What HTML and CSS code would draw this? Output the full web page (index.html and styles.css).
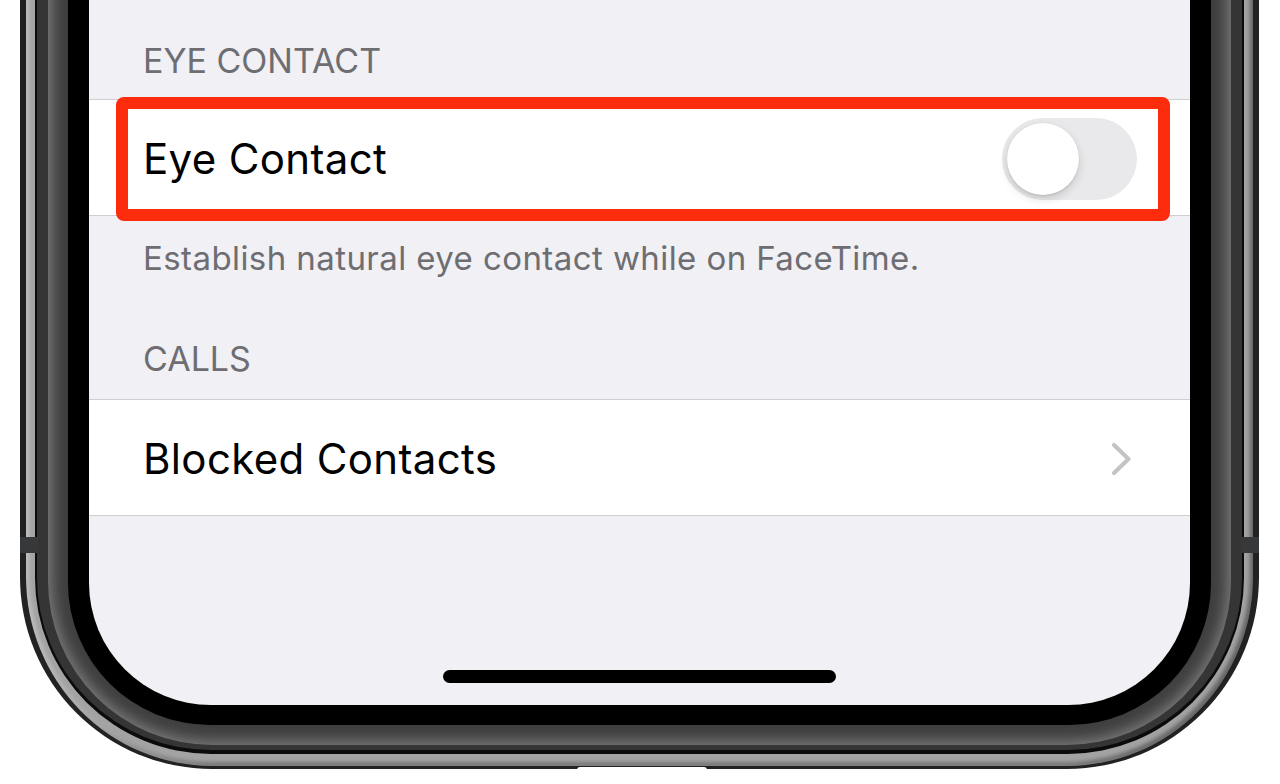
FILE: index.html
```html
<!DOCTYPE html>
<html lang="en">
<head>
<meta charset="utf-8">
<title>FaceTime Settings</title>
<link rel="stylesheet" href="styles.css">
</head>
<body>
<div class="phone">
  <div class="frame-a">
    <div class="frame-b">
      <div class="frame-c">
        <div class="bezel">
          <div class="screen">
            <div class="section-header first">EYE CONTACT</div>
            <div class="group">
              <div class="cell">
                <span class="cell-label">Eye Contact</span>
                <div class="switch"><div class="knob"></div></div>
                <div class="highlight"></div>
              </div>
            </div>
            <div class="section-footer">Establish natural eye contact while on FaceTime.</div>
            <div class="section-header second">CALLS</div>
            <div class="group">
              <div class="cell chevron-cell">
                <span class="cell-label">Blocked Contacts</span>
                <svg class="chevron" width="22" height="34" viewBox="0 0 22 34" aria-hidden="true">
                  <polyline points="3,3 17.5,17 3,31" fill="none" stroke="#c4c4c7" stroke-width="4.2" stroke-linecap="round" stroke-linejoin="round"/>
                </svg>
              </div>
            </div>
            <div class="home-indicator"></div>
          </div>
        </div>
      </div>
    </div>
  </div>
  <div class="side-btn left"></div>
  <div class="side-btn right"></div>
  <div class="bottom-notch"></div>
</div>
</body>
</html>
```

FILE: styles.css
```css
html, body {
  margin: 0;
  padding: 0;
  background: #ffffff;
  overflow: hidden;
}

body {
  font-family: "Inter", "Roboto", "Liberation Sans", sans-serif;
}

.phone {
  position: relative;
  width: 1239px;
  margin: -40px 0 0 20px;
}

.frame-a {
  border: 6px solid #222222;
  border-top: 0;
  border-bottom-width: 3px;
  border-radius: 0 0 192px 192px;
  background: #a3a3a3;
  box-shadow: inset 3px 0 4px rgba(255,255,255,0.35), inset -3px -3px 4px rgba(0,0,0,0.4);
  padding: 0 9px 12px;
}

.frame-b {
  border: 2px solid #0b0b0b;
  border-top: 0;
  border-bottom-width: 4px;
  border-radius: 0 0 176px 176px;
  background: #353535;
  padding: 0 11px 5px;
}

.frame-c {
  border-radius: 0 0 164px 164px;
  background: #3f3f3f;
  box-shadow: inset 0 0 14px 4px rgba(175,175,175,0.55);
  padding: 0 20px 20px;
}

.bezel {
  background: #000000;
  border-radius: 0 0 142px 142px;
  padding: 0 21px 20px;
}

.screen {
  height: 745px;
  background: #f0f0f5;
  border-radius: 0 0 122px 122px;
  overflow: hidden;
  display: flex;
  flex-direction: column;
}

.section-header {
  font-size: 34px;
  line-height: 40px;
  color: #6d6d72;
  padding-left: 54px;
  letter-spacing: 0;
}

.section-header.first {
  padding-top: 81px;
  padding-bottom: 18px;
}

.section-header.second {
  padding-top: 61px;
  padding-bottom: 20px;
}

.group {
  background: #ffffff;
  border-top: 1px solid #cfcfd3;
  border-bottom: 1px solid #cfcfd3;
}

.cell {
  position: relative;
  height: 115px;
  display: flex;
  align-items: center;
  justify-content: space-between;
  padding: 0 53px 0 54px;
}

.chevron-cell {
  padding-right: 57px;
}

.cell-label {
  font-size: 42px;
  color: #000000;
  line-height: 50px;
  letter-spacing: 0.35px;
  margin-top: 3px;
}

.switch {
  width: 135px;
  height: 82px;
  border-radius: 41px;
  background: #e9e9eb;
  margin-top: 3px;
  display: flex;
  align-items: center;
  padding-left: 5px;
  box-sizing: border-box;
}

.knob {
  width: 72px;
  height: 72px;
  border-radius: 50%;
  background: #ffffff;
  box-shadow: 0 4px 10px rgba(0,0,0,0.14), 0 2px 2px rgba(0,0,0,0.06), 0 0 0 0.5px rgba(0,0,0,0.04);
}

.chevron {
  display: block;
  margin-top: 2px;
}

.highlight {
  position: absolute;
  left: 27px;
  right: 20px;
  top: -3px;
  height: 124px;
  border: 12px solid #fd2c0c;
  border-radius: 8px;
  box-sizing: border-box;
}

.section-footer {
  font-size: 33px;
  line-height: 40px;
  color: #6d6d72;
  letter-spacing: 0.42px;
  padding: 22px 0 0 54px;
}

.home-indicator {
  width: 393px;
  height: 13px;
  border-radius: 7px;
  background: #000000;
  margin: auto auto 22px;
}

.side-btn {
  position: absolute;
  top: 577px;
  width: 18px;
  height: 16px;
  background: #36383a;
}

.side-btn.left {
  left: 0;
}

.side-btn.right {
  right: 0;
}

.bottom-notch {
  position: absolute;
  left: 557px;
  bottom: -1px;
  width: 130px;
  height: 3px;
  background: #ffffff;
  border-radius: 3px 3px 0 0;
}
```
